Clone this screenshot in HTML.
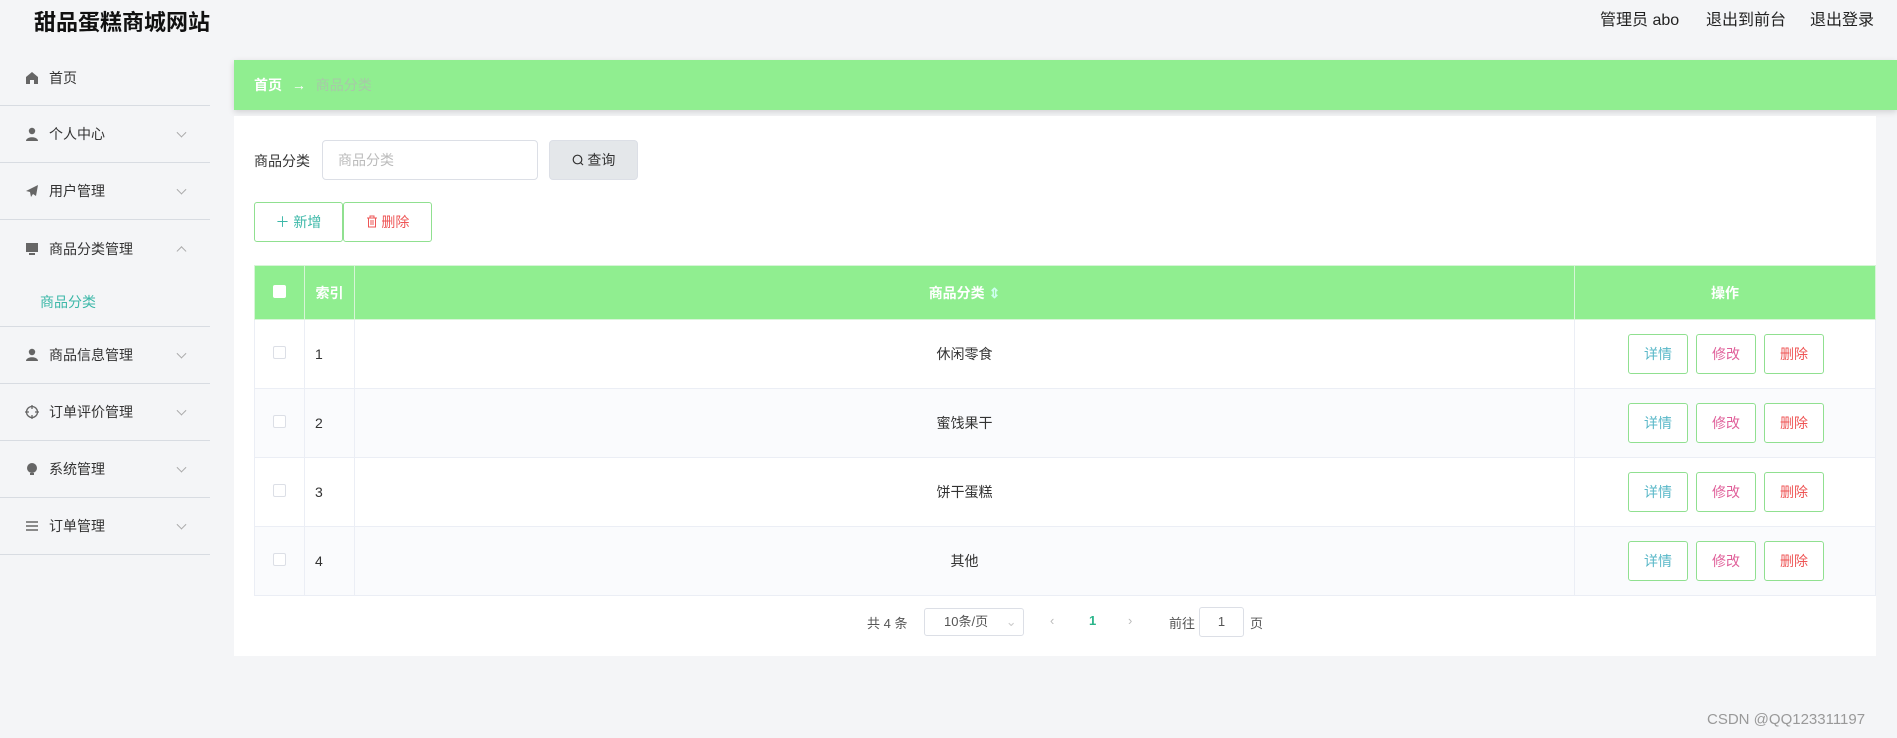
<!DOCTYPE html>
<html><head><meta charset="utf-8"><style>
*{box-sizing:border-box;margin:0;padding:0}
body{width:1897px;height:738px;overflow:hidden;background:#f4f5f7;font-family:"Liberation Sans","Noto Sans CJK SC",sans-serif;color:#333;position:relative}
.abs{position:absolute}
.title{left:34px;top:9px;font-size:22px;font-weight:bold;color:#111;line-height:28px}
.hr{top:10px;font-size:16px;color:#222;line-height:22px}
.side{left:0;top:50px;width:210px;height:688px;background:#f4f5f7}
.item{position:absolute;left:0;width:210px;height:57px;border-bottom:1px solid #d8dce2;font-size:14px;color:#333}
.item .t{position:absolute;left:49px;top:50%;transform:translateY(-50%)}
.item .ic{position:absolute;left:25px;top:50%;transform:translateY(-50%);width:14px;height:14px}
.item .ar{position:absolute;left:178px;top:50%;width:7px;height:7px;border-right:1px solid #aaa;border-bottom:1px solid #aaa;transform:translateY(-70%) rotate(45deg)}
.item .ar.up{transform:translateY(-20%) rotate(-135deg)}
.crumb{left:234px;top:60px;width:1663px;height:50px;background:#90ee90;box-shadow:0 2px 6px rgba(0,0,0,.15);font-size:14px;line-height:50px;padding-left:20px;color:#fff}
.panel{left:234px;top:116px;width:1642px;height:540px;background:#fff}
.btn{position:absolute;border:1px solid #90e090;border-radius:3px;background:#fff;font-size:14px;text-align:center}
table{position:absolute;left:254px;top:265px;width:1622px;border-collapse:collapse;font-size:14px}
td,th{border:1px solid #ebeef5;text-align:center}
th{background:#90ee90;color:#fff;height:54px;font-weight:bold;border-color:#d7f5d7}
td{height:69px}
tr.s td{background:#fafbfd}
.cb{display:inline-block;width:13px;height:13px;border:1px solid #dcdfe6;border-radius:2px;background:#fff}
</style></head><body>
<div class="abs title">甜品蛋糕商城网站</div>
<div class="abs hr" style="left:1600px">管理员 abo</div>
<div class="abs hr" style="left:1706px">退出到前台</div>
<div class="abs hr" style="left:1810px">退出登录</div>

<div class="abs side"></div>
<div class="item" style="top:50px;height:56px"><svg class="ic" viewBox="0 0 14 14"><path d="M7 1L1 6v7h4V9h4v4h4V6z" fill="#666"/></svg><span class="t">首页</span></div>
<div class="item" style="top:106px"><svg class="ic" viewBox="0 0 14 14"><circle cx="7" cy="4" r="3.2" fill="#666"/><path d="M1 14c0-5 12-5 12 0z" fill="#666"/></svg><span class="t">个人中心</span><i class="ar"></i></div>
<div class="item" style="top:163px"><svg class="ic" viewBox="0 0 14 14"><path d="M13 1L1 7l4 1 1 5 2-3 3 2z" fill="#666"/></svg><span class="t">用户管理</span><i class="ar"></i></div>
<div class="item" style="top:220px;height:107px"><div style="position:absolute;top:0;height:57px;width:210px"><svg class="ic" viewBox="0 0 14 14"><rect x="1" y="1" width="12" height="9" fill="#666"/><rect x="4" y="11" width="6" height="2" fill="#666"/></svg><span class="t">商品分类管理</span><i class="ar up"></i></div><span style="position:absolute;left:40px;top:72px;color:#3cb8a8;font-size:14px">商品分类</span></div>
<div class="item" style="top:327px"><svg class="ic" viewBox="0 0 14 14"><circle cx="7" cy="4" r="3.2" fill="#666"/><path d="M1 13c0-5 12-5 12 0z" fill="#666"/></svg><span class="t">商品信息管理</span><i class="ar"></i></div>
<div class="item" style="top:384px"><svg class="ic" viewBox="0 0 14 14"><circle cx="7" cy="7" r="5.5" fill="none" stroke="#666" stroke-width="1.3"/><path d="M7 0v4M7 10v4M0 7h4M10 7h4" stroke="#666" stroke-width="1.3"/></svg><span class="t">订单评价管理</span><i class="ar"></i></div>
<div class="item" style="top:441px"><svg class="ic" viewBox="0 0 14 14"><circle cx="7" cy="6" r="5" fill="#666"/><rect x="5" y="11" width="4" height="2" fill="#666"/></svg><span class="t">系统管理</span><i class="ar"></i></div>
<div class="item" style="top:498px"><svg class="ic" viewBox="0 0 14 14"><path d="M1 3h12M1 7h12M1 11h12" stroke="#666" stroke-width="1.6"/></svg><span class="t">订单管理</span><i class="ar"></i></div>

<div class="abs crumb"><b>首页</b> <span style="margin:0 6px">→</span> <span style="color:#a8c8a8">商品分类</span></div>
<div class="abs panel"></div>
<div class="abs" style="left:254px;top:151px;font-size:14px">商品分类</div>
<div class="abs" style="left:322px;top:140px;width:216px;height:40px;border:1px solid #dcdfe6;border-radius:4px;background:#fff;font-size:14px;color:#bbb;line-height:38px;padding-left:15px">商品分类</div>
<div class="abs" style="left:549px;top:140px;width:89px;height:40px;background:#e4e7ea;border:1px solid #dcdfe6;border-radius:4px;font-size:14px;line-height:38px;text-align:center;color:#333"><svg width="12" height="12" viewBox="0 0 12 12" style="vertical-align:-1px"><circle cx="5.5" cy="5.5" r="4.3" fill="none" stroke="#333" stroke-width="1.2"/><path d="M8.5 8.5l2.5 2.5" stroke="#333" stroke-width="1.2"/></svg> 查询</div>
<div class="btn" style="left:254px;top:202px;width:89px;height:40px;line-height:38px;color:#3cb8a8">＋ 新增</div>
<div class="btn" style="left:343px;top:202px;width:89px;height:40px;line-height:38px;color:#e55"><svg width="12" height="13" viewBox="0 0 12 13" style="vertical-align:-1px"><path d="M1 3h10M4 3V1h4v2M2.5 3v9h7V3M5 5v5M7 5v5" fill="none" stroke="#e55" stroke-width="1"/></svg> 删除</div>

<table>
<tr><th style="width:50px"><span class="cb" style="border:none"></span></th><th style="width:50px">索引</th><th>商品分类 <span style="color:#cfe">⇕</span></th><th style="width:301px">操作</th></tr>
<tr><td><span class="cb"></span></td><td style="text-align:left;padding-left:10px">1</td><td>休闲零食</td><td class="op"></td></tr>
<tr class="s"><td><span class="cb"></span></td><td style="text-align:left;padding-left:10px">2</td><td>蜜饯果干</td><td class="op"></td></tr>
<tr><td><span class="cb"></span></td><td style="text-align:left;padding-left:10px">3</td><td>饼干蛋糕</td><td class="op"></td></tr>
<tr class="s"><td><span class="cb"></span></td><td style="text-align:left;padding-left:10px">4</td><td>其他</td><td class="op"></td></tr>
</table>
<div class="btn" style="left:1628px;top:334px;width:60px;height:40px;line-height:38px;color:#5ab8c8">详情</div>
<div class="btn" style="left:1696px;top:334px;width:60px;height:40px;line-height:38px;color:#e0609a">修改</div>
<div class="btn" style="left:1764px;top:334px;width:60px;height:40px;line-height:38px;color:#e55">删除</div>
<div class="btn" style="left:1628px;top:403px;width:60px;height:40px;line-height:38px;color:#5ab8c8">详情</div>
<div class="btn" style="left:1696px;top:403px;width:60px;height:40px;line-height:38px;color:#e0609a">修改</div>
<div class="btn" style="left:1764px;top:403px;width:60px;height:40px;line-height:38px;color:#e55">删除</div>
<div class="btn" style="left:1628px;top:472px;width:60px;height:40px;line-height:38px;color:#5ab8c8">详情</div>
<div class="btn" style="left:1696px;top:472px;width:60px;height:40px;line-height:38px;color:#e0609a">修改</div>
<div class="btn" style="left:1764px;top:472px;width:60px;height:40px;line-height:38px;color:#e55">删除</div>
<div class="btn" style="left:1628px;top:541px;width:60px;height:40px;line-height:38px;color:#5ab8c8">详情</div>
<div class="btn" style="left:1696px;top:541px;width:60px;height:40px;line-height:38px;color:#e0609a">修改</div>
<div class="btn" style="left:1764px;top:541px;width:60px;height:40px;line-height:38px;color:#e55">删除</div>

<div class="abs" style="left:867px;top:613px;font-size:13px;color:#555">共 4 条</div>
<div class="abs" style="left:924px;top:608px;width:100px;height:28px;border:1px solid #dcdfe6;border-radius:3px;font-size:13px;line-height:26px;padding-left:19px;color:#555">10条/页 <span style="color:#ccc;margin-left:14px">⌄</span></div>
<div class="abs" style="left:1050px;top:613px;font-size:13px;color:#bbb">‹</div>
<div class="abs" style="left:1089px;top:613px;font-size:13px;color:#2bb58a;font-weight:bold">1</div>
<div class="abs" style="left:1128px;top:613px;font-size:13px;color:#bbb">›</div>
<div class="abs" style="left:1169px;top:613px;font-size:13px;color:#555">前往</div>
<div class="abs" style="left:1199px;top:607px;width:45px;height:30px;border:1px solid #dcdfe6;border-radius:3px;font-size:13px;line-height:28px;text-align:center;color:#555">1</div>
<div class="abs" style="left:1250px;top:613px;font-size:13px;color:#555">页</div>
<div class="abs" style="left:1707px;top:711px;font-size:15px;color:#999">CSDN @QQ123311197</div>
</body></html>
